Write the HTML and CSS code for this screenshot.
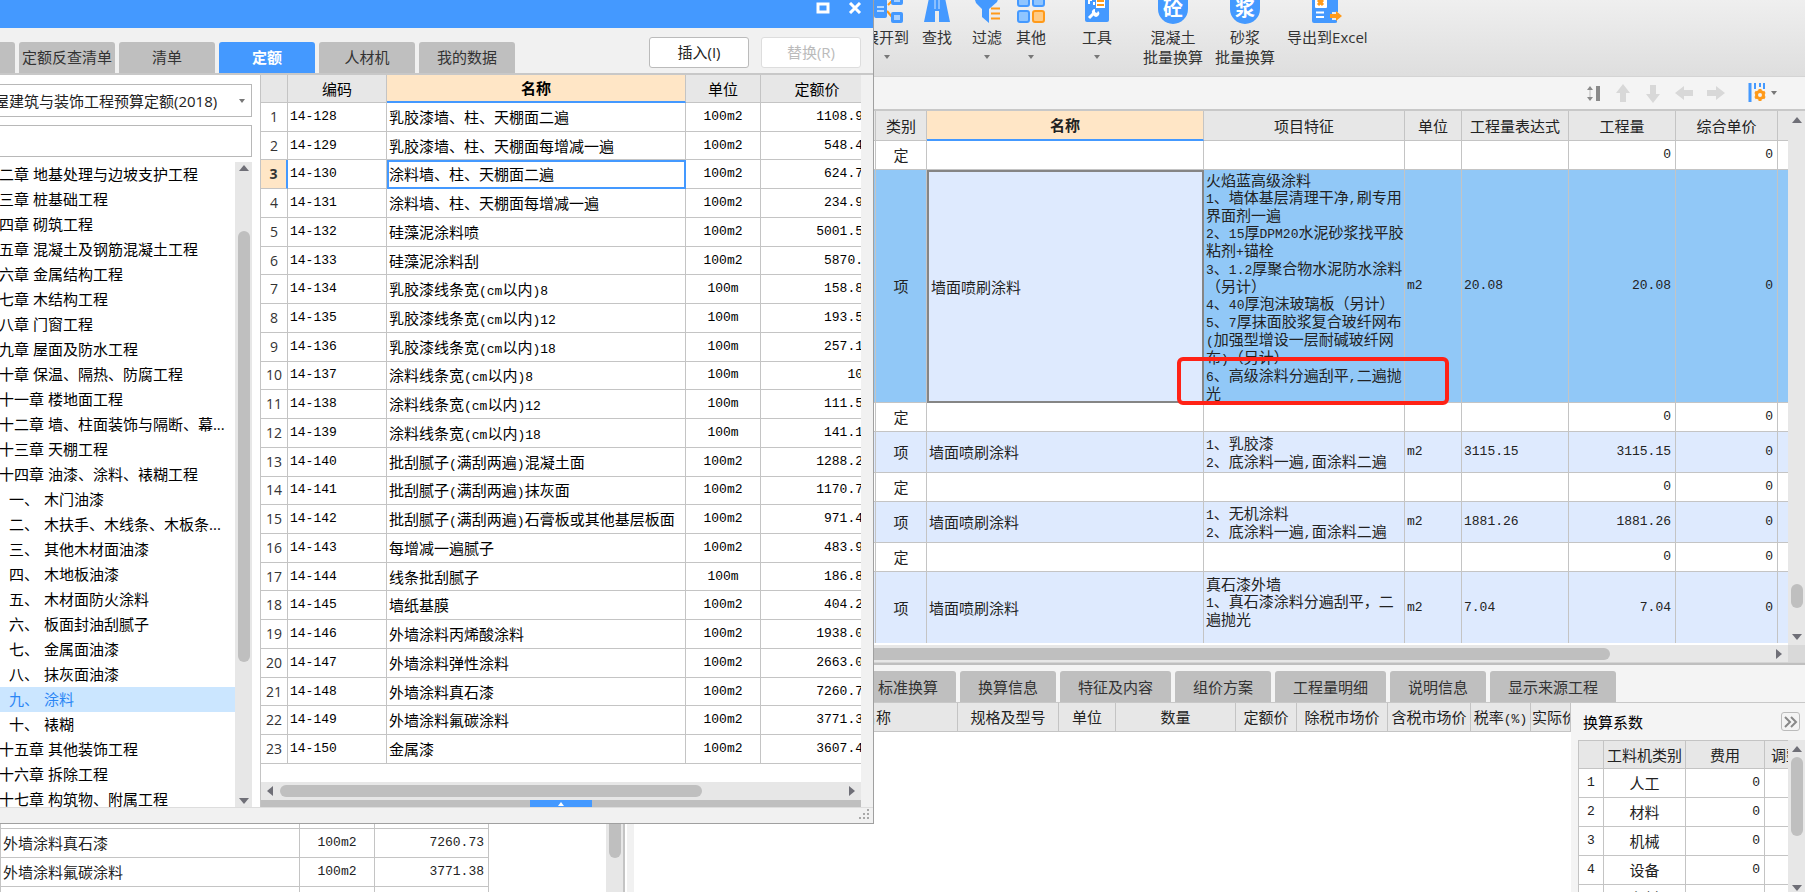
FILE: index.html
```html
<!DOCTYPE html>
<html lang="zh-CN">
<head>
<meta charset="utf-8">
<title>定额查询</title>
<link rel="stylesheet" href="styles.css">
</head>
<body>
<div class="app">
  <aside class="back-pane">
    <div class="back-list">
      <table class="grid back-table">
        <colgroup><col><col class="w75"><col class="w114"></colgroup>
        <tbody>
          <tr><td></td><td></td><td></td></tr>
          <tr><td>外墙涂料真石漆</td><td class="num mid">100m2</td><td class="num end">7260.73</td></tr>
          <tr><td>外墙涂料氟碳涂料</td><td class="num mid">100m2</td><td class="num end">3771.38</td></tr>
          <tr class="peek"><td></td><td></td><td></td></tr>
        </tbody>
      </table>
    </div>
    <div class="vscroll back-scroll"><span class="thumb"></span></div>
    <div class="splitter"></div>
  </aside>

  <main class="workspace">
    <header class="ribbon">
      <div class="group">
        <button class="tool" type="button">
          <svg width="32" height="24" viewBox="0 0 32 24"><path d="M17 5l4-4M16 11l5 6" stroke="#ff9a1a" stroke-width="2" fill="none"/><rect x="3" y="-1" width="13" height="19" rx="2" fill="#49f"/><path d="M6 7h7M6 11h7" stroke="#b5d8ff" stroke-width="2"/><rect x="20" y="-6" width="12" height="11" rx="2" fill="#49f"/><rect x="23" y="-2" width="6" height="4" fill="#a9d1ff"/><rect x="20" y="12" width="12" height="11" rx="2" fill="#49f"/><rect x="23" y="15" width="6" height="5" fill="#a9d1ff"/></svg>
          <span>展开到</span><i class="caret"></i>
        </button>
        <button class="tool" type="button">
          <svg width="32" height="24" viewBox="0 0 32 24"><path d="M8-2h16l5 24H18V11h-4v11H3z" fill="#49f"/><path d="M14 0v9M18 0v9" stroke="#cfe5ff"/></svg>
          <span>查找</span>
        </button>
      </div>
      <div class="group tight">
        <button class="tool" type="button">
          <svg width="32" height="24" viewBox="0 0 32 24"><path d="M3-3h25l-2 5-8 7v14l-7-6V9L5 3z" fill="#49f"/><path d="M20 8.500h9M20 13.500h9M20 18.500h9" stroke="#ff9a1a" stroke-width="2"/></svg>
          <span>过滤</span><i class="caret"></i>
        </button>
        <button class="tool" type="button">
          <svg width="32" height="24" viewBox="0 0 32 24" fill="#8fc5ff" stroke="#49f" stroke-width="2"><rect x="3" y="-4" width="11" height="10" rx="2"/><rect x="18" y="-4" width="11" height="10" rx="2"/><rect x="3" y="11" width="11" height="11" rx="2"/><rect x="18" y="11" width="11" height="11" rx="2" fill="#ffcb85" stroke="#ff9a1a"/></svg>
          <span>其他</span><i class="caret"></i>
        </button>
      </div>
      <div class="group apart">
        <button class="tool" type="button">
          <svg width="32" height="24" viewBox="0 0 32 24"><rect x="4" y="-4" width="24" height="26" rx="2" fill="#49f"/><path d="M8 4V0h3M13 2v3" stroke="#fff" stroke-width="2" fill="none"/><rect x="15" y="-3" width="9" height="11" fill="#fff"/><path d="M16 1h7M16 5h7" stroke="#ff9a1a" stroke-width="2"/><path d="M8 18l5-5" stroke="#fff" stroke-width="3"/><path d="M11 13a3 3 0 0 1 3-4v3l2 1 1-2a3 3 0 0 1-4 5z" fill="#fff"/></svg>
          <span>工具</span><i class="caret"></i>
        </button>
      </div>
      <div class="group wide">
        <button class="tool" type="button"><span class="seal"><b>砼</b></span><span>混凝土</span><span>批量换算</span></button>
        <button class="tool" type="button"><span class="seal"><b>浆</b></span><span>砂浆</span><span>批量换算</span></button>
        <button class="tool" type="button">
          <svg width="32" height="24" viewBox="0 0 32 24"><path d="M1-4h26v16h-6v8h5v2q0 1-2 1H3q-2 0-2-2z" fill="#49f"/><rect x="4" y="-3" width="12" height="11" rx="1" fill="#fff"/><path d="M7 0l5 5M12 0L7 5" stroke="#ff9a1a" stroke-width="3"/><path d="M5 12.500h8M5 17h8" stroke="#fff" stroke-width="2"/><path d="M19 14h6v-3l6 5-6 5v-3h-6z" fill="#ff9a1a"/></svg>
          <span>导出到Excel</span>
        </button>
      </div>
    </header>

    <div class="actions">
      <button type="button" aria-label="行高"><svg width="18" height="18" viewBox="0 0 18 18"><path d="M3 6l3-4 3 4zM3 13l3 4 3-4z" fill="#8a8a8a"/><path d="M6 6v7" stroke="#bbb"/><rect x="12" y="2" width="4" height="15" fill="#8a8a8a"/></svg></button>
      <button type="button" aria-label="上移"><svg width="18" height="20" viewBox="0 0 18 20"><path d="M9 1l7 9h-4v9H6v-9H2z" fill="#d8d8d8"/></svg></button>
      <button type="button" aria-label="下移"><svg width="18" height="20" viewBox="0 0 18 20"><path d="M9 20l7-9h-4V2H6v9H2z" fill="#d8d8d8"/></svg></button>
      <button type="button" aria-label="左移"><svg width="20" height="18" viewBox="0 0 20 18"><path d="M1 9l9-7v4h9v6h-9v4z" fill="#d8d8d8"/></svg></button>
      <button type="button" aria-label="右移"><svg width="20" height="18" viewBox="0 0 20 18"><path d="M19 9l-9-7v4H1v6h9v4z" fill="#d8d8d8"/></svg></button>
      <button class="setup" type="button" aria-label="列设置"><svg width="18" height="20" viewBox="0 0 18 20"><path d="M2 0v19" stroke="#49f" stroke-width="3"/><path d="M7 0v6M12 0v4M16 0v6" stroke="#49f" stroke-width="2"/><circle cx="12" cy="12" r="3.500" fill="none" stroke="#ff9a1a" stroke-width="3"/><g stroke="#ff9a1a" stroke-width="3"><path d="M12 6v2M12 16v2M7 9l2 1M15 14l2 1M7 15l2-1M15 10l2-1"/></g></svg><i class="caret"></i></button>
    </div>

    <section class="bill">
      <div class="bill-view">
        <table class="grid bill-table">
          <colgroup><col class="w16"><col class="w51"><col><col class="w201"><col class="w57"><col class="w107"><col class="w107"><col class="w102"><col class="w10"></colgroup>
          <thead><tr><th></th><th>类别</th><th class="current">名称</th><th>项目特征</th><th>单位</th><th>工程量表达式</th><th>工程量</th><th>综合单价</th><th></th></tr></thead>
          <tbody>
            <tr class="quota"><td></td><td class="mid">定</td><td></td><td></td><td></td><td></td><td class="num end">0</td><td class="num end">0</td><td></td></tr>
            <tr class="item picked"><td></td><td class="mid">项</td><td class="focus">墙面喷刷涂料</td>
              <td class="spec">火焰蓝高级涂料<br><i>1</i>、墙体基层清理干净<i>,</i>刷专用<br>界面剂一遍<br><i>2</i>、<i>15</i>厚<i>DPM20</i>水泥砂浆找平胶<br>粘剂<i>+</i>锚栓<br><i>3</i>、<i>1.2</i>厚聚合物水泥防水涂料<br>（另计）<br><i>4</i>、<i>40</i>厚泡沫玻璃板（另计）<br><i>5</i>、<i>7</i>厚抹面胶浆复合玻纤网布<br><i>(</i>加强型增设一层耐碱玻纤网<br>布<i>)</i>（另计）<br><i>6</i>、高级涂料分遍刮平<i>,</i>二遍抛<br>光<div class="marker"></div></td>
              <td class="num">m2</td><td class="num">20.08</td><td class="num end">20.08</td><td class="num end">0</td><td></td></tr>
            <tr class="quota"><td></td><td class="mid">定</td><td></td><td></td><td></td><td></td><td class="num end">0</td><td class="num end">0</td><td></td></tr>
            <tr class="item"><td></td><td class="mid">项</td><td>墙面喷刷涂料</td><td class="spec"><i>1</i>、乳胶漆<br><i>2</i>、底涂料一遍<i>,</i>面涂料二遍</td><td class="num">m2</td><td class="num">3115.15</td><td class="num end">3115.15</td><td class="num end">0</td><td></td></tr>
            <tr class="quota"><td></td><td class="mid">定</td><td></td><td></td><td></td><td></td><td class="num end">0</td><td class="num end">0</td><td></td></tr>
            <tr class="item"><td></td><td class="mid">项</td><td>墙面喷刷涂料</td><td class="spec"><i>1</i>、无机涂料<br><i>2</i>、底涂料一遍<i>,</i>面涂料二遍</td><td class="num">m2</td><td class="num">1881.26</td><td class="num end">1881.26</td><td class="num end">0</td><td></td></tr>
            <tr class="quota"><td></td><td class="mid">定</td><td></td><td></td><td></td><td></td><td class="num end">0</td><td class="num end">0</td><td></td></tr>
            <tr class="item last"><td></td><td class="mid">项</td><td>墙面喷刷涂料</td><td class="spec">真石漆外墙<br><i>1</i>、真石漆涂料分遍刮平，二<br>遍抛光</td><td class="num">m2</td><td class="num">7.04</td><td class="num end">7.04</td><td class="num end">0</td><td></td></tr>
          </tbody>
        </table>
      </div>
      <div class="vscroll bill-scroll"><i class="arrow up"></i><span class="thumb"></span><i class="arrow down"></i></div>
    </section>
    <div class="hscroll bill-hscroll"><span class="thumb"></span><i class="arrow right"></i><span class="corner"></span></div>

    <section class="detail">
      <nav class="tabs">
        <button type="button">标准换算</button><button type="button">换算信息</button><button type="button">特征及内容</button><button type="button">组价方案</button><button type="button">工程量明细</button><button type="button">说明信息</button><button type="button">显示来源工程</button>
      </nav>
      <div class="detail-body">
        <div class="detail-view">
          <table class="grid detail-table">
            <colgroup><col class="w98"><col class="w101"><col class="w57"><col class="w120"><col class="w61"><col class="w91"><col class="w83"><col class="w60"><col></colgroup>
            <thead><tr><th class="start">名称</th><th>规格及型号</th><th>单位</th><th>数量</th><th>定额价</th><th>除税市场价</th><th>含税市场价</th><th>税率<i>(%)</i></th><th class="start">实际价</th></tr></thead>
          </table>
        </div>
        <aside class="factor">
          <div class="factor-head"><span>换算系数</span><button type="button" aria-label="收起"><svg width="15" height="12" viewBox="0 0 15 12"><path d="M2 1l5 5-5 5M8 1l5 5-5 5" fill="none" stroke="#888" stroke-width="2"/></svg></button></div>
          <div class="factor-main">
            <div class="factor-view">
              <table class="grid factor-table">
                <colgroup><col class="w25"><col class="w82"><col class="w79"><col></colgroup>
                <thead><tr><th></th><th>工料机类别</th><th>费用</th><th class="start">调整</th></tr></thead>
                <tbody>
                  <tr><td class="num mid">1</td><td class="mid">人工</td><td class="num end">0</td><td></td></tr>
                  <tr><td class="num mid">2</td><td class="mid">材料</td><td class="num end">0</td><td></td></tr>
                  <tr><td class="num mid">3</td><td class="mid">机械</td><td class="num end">0</td><td></td></tr>
                  <tr><td class="num mid">4</td><td class="mid">设备</td><td class="num end">0</td><td></td></tr>
                  <tr class="cut"><td></td><td class="mid">主材</td><td></td><td></td></tr>
                </tbody>
              </table>
            </div>
            <div class="vscroll factor-scroll"><i class="arrow up"></i><span class="thumb"></span><i class="arrow down"></i></div>
          </div>
        </aside>
      </div>
    </section>
  </main>
</div>

<section class="dialog" role="dialog" aria-label="查询">
  <div class="titlebar">
    <button type="button" aria-label="最大化"><svg width="14" height="12" viewBox="0 0 14 12"><rect x="2" y="2" width="10" height="8" fill="none" stroke="#fff" stroke-width="3"/></svg></button>
    <button type="button" aria-label="关闭"><svg width="14" height="12" viewBox="0 0 14 12"><path d="M2 1l10 10M12 1L2 11" stroke="#fff" stroke-width="3"/></svg></button>
  </div>
  <div class="dialog-top">
    <nav class="tabs"><button class="stub" type="button" aria-label="上一页"></button><button type="button">定额反查清单</button><button type="button">清单</button><button class="on" type="button">定额</button><button type="button">人材机</button><button type="button">我的数据</button></nav>
    <div class="commands"><button type="button">插入(I)</button><button type="button" disabled>替换(R)</button></div>
  </div>
  <div class="dialog-body">
    <div class="catalog">
      <div class="pick"><select aria-label="定额库"><option>屋建筑与装饰工程预算定额(2018)</option></select><i class="caret"></i></div>
      <input class="search" type="text" aria-label="搜索">
      <div class="tree-box">
        <ul class="tree">
          <li>二章 地基处理与边坡支护工程</li><li>三章 桩基础工程</li><li>四章 砌筑工程</li><li>五章 混凝土及钢筋混凝土工程</li><li>六章 金属结构工程</li><li>七章 木结构工程</li><li>八章 门窗工程</li><li>九章 屋面及防水工程</li><li>十章 保温、隔热、防腐工程</li><li>十一章 楼地面工程</li><li>十二章 墙、柱面装饰与隔断、幕...</li><li>十三章 天棚工程</li><li>十四章 油漆、涂料、裱糊工程</li>
          <li class="sub"><span>一、</span>木门油漆</li><li class="sub"><span>二、</span>木扶手、木线条、木板条...</li><li class="sub"><span>三、</span>其他木材面油漆</li><li class="sub"><span>四、</span>木地板油漆</li><li class="sub"><span>五、</span>木材面防火涂料</li><li class="sub"><span>六、</span>板面封油刮腻子</li><li class="sub"><span>七、</span>金属面油漆</li><li class="sub"><span>八、</span>抹灰面油漆</li><li class="sub on"><span>九、</span>涂料</li><li class="sub"><span>十、</span>裱糊</li>
          <li>十五章 其他装饰工程</li><li>十六章 拆除工程</li><li>十七章 构筑物、附属工程</li>
        </ul>
        <div class="vscroll tree-scroll"><i class="arrow up"></i><span class="thumb"></span><i class="arrow down"></i></div>
      </div>
    </div>
    <div class="results">
      <div class="results-view">
        <table class="grid results-table">
          <colgroup><col class="w27"><col class="w99"><col><col class="w75"><col class="w113"></colgroup>
          <thead><tr><th></th><th>编码</th><th class="current">名称</th><th>单位</th><th>定额价</th></tr></thead>
          <tbody>
            <tr><td>1</td><td>14-128</td><td>乳胶漆墙、柱、天棚面二遍</td><td>100m2</td><td>1108.9</td></tr>
            <tr><td>2</td><td>14-129</td><td>乳胶漆墙、柱、天棚面每增减一遍</td><td>100m2</td><td>548.4</td></tr>
            <tr class="chosen"><td>3</td><td>14-130</td><td>涂料墙、柱、天棚面二遍</td><td>100m2</td><td>624.7</td></tr>
            <tr><td>4</td><td>14-131</td><td>涂料墙、柱、天棚面每增减一遍</td><td>100m2</td><td>234.9</td></tr>
            <tr><td>5</td><td>14-132</td><td>硅藻泥涂料喷</td><td>100m2</td><td>5001.5</td></tr>
            <tr><td>6</td><td>14-133</td><td>硅藻泥涂料刮</td><td>100m2</td><td>5870.</td></tr>
            <tr><td>7</td><td>14-134</td><td>乳胶漆线条宽<i>(cm</i>以内<i>)8</i></td><td>100m</td><td>158.8</td></tr>
            <tr><td>8</td><td>14-135</td><td>乳胶漆线条宽<i>(cm</i>以内<i>)12</i></td><td>100m</td><td>193.5</td></tr>
            <tr><td>9</td><td>14-136</td><td>乳胶漆线条宽<i>(cm</i>以内<i>)18</i></td><td>100m</td><td>257.1</td></tr>
            <tr><td>10</td><td>14-137</td><td>涂料线条宽<i>(cm</i>以内<i>)8</i></td><td>100m</td><td>10</td></tr>
            <tr><td>11</td><td>14-138</td><td>涂料线条宽<i>(cm</i>以内<i>)12</i></td><td>100m</td><td>111.5</td></tr>
            <tr><td>12</td><td>14-139</td><td>涂料线条宽<i>(cm</i>以内<i>)18</i></td><td>100m</td><td>141.1</td></tr>
            <tr><td>13</td><td>14-140</td><td>批刮腻子<i>(</i>满刮两遍<i>)</i>混凝土面</td><td>100m2</td><td>1288.2</td></tr>
            <tr><td>14</td><td>14-141</td><td>批刮腻子<i>(</i>满刮两遍<i>)</i>抹灰面</td><td>100m2</td><td>1170.7</td></tr>
            <tr><td>15</td><td>14-142</td><td>批刮腻子<i>(</i>满刮两遍<i>)</i>石膏板或其他基层板面</td><td>100m2</td><td>971.4</td></tr>
            <tr><td>16</td><td>14-143</td><td>每增减一遍腻子</td><td>100m2</td><td>483.9</td></tr>
            <tr><td>17</td><td>14-144</td><td>线条批刮腻子</td><td>100m</td><td>186.8</td></tr>
            <tr><td>18</td><td>14-145</td><td>墙纸基膜</td><td>100m2</td><td>404.2</td></tr>
            <tr><td>19</td><td>14-146</td><td>外墙涂料丙烯酸涂料</td><td>100m2</td><td>1938.0</td></tr>
            <tr><td>20</td><td>14-147</td><td>外墙涂料弹性涂料</td><td>100m2</td><td>2663.0</td></tr>
            <tr><td>21</td><td>14-148</td><td>外墙涂料真石漆</td><td>100m2</td><td>7260.7</td></tr>
            <tr><td>22</td><td>14-149</td><td>外墙涂料氟碳涂料</td><td>100m2</td><td>3771.3</td></tr>
            <tr><td>23</td><td>14-150</td><td>金属漆</td><td>100m2</td><td>3607.4</td></tr>
          </tbody>
        </table>
      </div>
      <div class="hscroll results-hscroll"><i class="arrow left"></i><span class="thumb"></span><i class="arrow right"></i></div>
      <div class="drawer"><button type="button" aria-label="展开"></button></div>
    </div>
  </div>
  <div class="statusbar"><svg width="12" height="12" viewBox="0 0 12 12" fill="#a8a8a8"><path d="M9 0h2v2H9zM9 4h2v2H9zM5 4h2v2H5zM9 8h2v2H9zM5 8h2v2H5zM1 8h2v2H1z"/></svg></div>
</section>
</body>
</html>
```
FILE: styles.css
```css
* { box-sizing: border-box; }

body {
  margin: 0;
  height: 100vh;
  overflow: hidden;
  position: relative;
  background: #fff;
  color: #222;
  font: 15px/20px "Open Sans", "Noto Sans CJK SC", sans-serif;
}

button {
  margin: 0;
  padding: 0;
  border: 0;
  background: none;
  color: inherit;
  font: inherit;
}

svg { display: block; }

/* shared tables */
.grid {
  width: 100%;
  border-spacing: 0;
  table-layout: fixed;
  font-family: "Noto Sans CJK SC", sans-serif;
}
.grid th, .grid td {
  padding: 0 2px;
  border-right: 1px solid #c4c4c4;
  border-bottom: 1px solid #c4c4c4;
  text-align: left;
  white-space: nowrap;
  overflow: hidden;
}
.grid th {
  background: #e7e7e7;
  font-weight: 400;
  text-align: center;
}
.grid th.start { text-align: left; }
.grid th.current {
  background: #ffe6c6;
  border-bottom: 2px solid #49f;
  font-weight: 700;
}
.grid .num, .grid i {
  font-family: "Liberation Mono", monospace;
  font-size: 13px;
  font-style: normal;
}
.grid i { line-height: 1; }
.grid .mid { text-align: center; }
.grid .end { text-align: right; padding-right: 4px; }

.w10 { width: 10px; }
.w16 { width: 16px; }
.w25 { width: 25px; }
.w27 { width: 27px; }
.w51 { width: 51px; }
.w57 { width: 57px; }
.w60 { width: 60px; }
.w61 { width: 61px; }
.w75 { width: 75px; }
.w79 { width: 79px; }
.w82 { width: 82px; }
.w83 { width: 83px; }
.w91 { width: 91px; }
.w98 { width: 98px; }
.w99 { width: 99px; }
.w101 { width: 101px; }
.w102 { width: 102px; }
.w107 { width: 107px; }
.w113 { width: 113px; }
.w114 { width: 114px; }
.w120 { width: 120px; }
.w201 { width: 201px; }

/* scroll bars */
.vscroll {
  flex: none;
  width: 17px;
  display: flex;
  flex-direction: column;
  align-items: center;
  background: #e7e7e7;
}
.hscroll {
  flex: none;
  height: 18px;
  display: flex;
  align-items: center;
  background: #e7e7e7;
}
.thumb { background: #bfbfbf; border-radius: 6px; }
.vscroll .thumb { width: 12px; }
.hscroll .thumb { height: 12px; }
.arrow { border: 5px solid transparent; width: 0; height: 0; }
.arrow.up { border-top: 0; border-bottom: 6px solid #6f6f77; }
.arrow.down { border-bottom: 0; border-top: 6px solid #6f6f77; margin-top: auto; }
.arrow.left { border-left: 0; border-right: 6px solid #6f6f77; }
.arrow.right { border-right: 0; border-left: 6px solid #6f6f77; margin-left: auto; }
.caret {
  width: 0;
  height: 0;
  border: 3px solid transparent;
  border-top: 4px solid #777;
  border-bottom: 0;
}

/* tabs */
.tabs { display: flex; gap: 4px; }
.tabs button {
  height: 31px;
  padding: 0 18px;
  background: #bfbfbf;
  border-radius: 3px 3px 0 0;
  white-space: nowrap;
  color: #333;
}

/* main window */
.app { display: flex; height: 100%; }
.back-pane { flex: none; width: 634px; display: flex; }
.back-list {
  flex: 1;
  display: flex;
  flex-direction: column;
  justify-content: flex-end;
  padding-right: 117px;
}
.back-table { border-left: 1px solid #c4c4c4; }
.back-table td { height: 29px; }
.back-table .peek td { height: 5px; border-bottom: 0; }
.back-scroll .thumb { height: 858px; }
.splitter {
  width: 11px;
  border-left: 2px solid #c4c4c4;
  border-right: 7px solid #f1f1f1;
}

.workspace {
  flex: 1;
  min-width: 0;
  display: flex;
  flex-direction: column;
  padding-left: 226px;
}

.ribbon {
  flex: none;
  height: 76px;
  display: flex;
  gap: 6px;
  padding-left: 4px;
  background: linear-gradient(#efefef, #dedede);
}
.group { display: flex; gap: 6px; }
.group.tight { gap: 0; }
.group.apart { margin-left: 16px; }
.group.wide { gap: 12px; margin-left: 18px; }
.tool {
  min-width: 44px;
  display: flex;
  flex-direction: column;
  align-items: center;
  color: #333;
  white-space: nowrap;
}
.tool svg, .tool .seal { margin-bottom: 3px; }
.tool .caret { margin-top: 8px; }
.seal {
  width: 30px;
  height: 24px;
  display: flex;
  align-items: flex-end;
  justify-content: center;
  background: #49f;
  border-radius: 0 0 15px 15px;
  color: #fff;
  font-size: 20px;
  line-height: 30px;
}

.actions {
  flex: none;
  height: 35px;
  display: flex;
  align-items: center;
  justify-content: flex-end;
  gap: 12px;
  padding-right: 28px;
  background: #f4f4f4;
  border-top: 1px solid #d4d4d4;
  border-bottom: 2px solid #c8c8c8;
}
.setup { display: flex; align-items: center; gap: 5px; margin-left: 10px; }

.bill { flex: 1; min-height: 0; display: flex; }
.bill-view { flex: 1; min-width: 0; overflow: hidden; margin-bottom: 2px; }
.bill-table th { height: 30px; }
.bill-table .quota td { height: 29px; }
.bill-table .item td { height: 41px; background: #deeafe; }
.bill-table .picked td { height: 233px; background: #91c8f7; }
.bill-table .item.last td { height: 71px; border-bottom: 0; }
.bill-table th:last-child, .bill-table td:last-child { border-right: 0; }
.bill-table .picked .focus { background: #deeafe; border: 2px solid #858585; }
.bill-table .spec {
  position: relative;
  overflow: visible;
  line-height: 17px;
  color: #222;
}
.bill-table .last .spec { vertical-align: top; padding-top: 3px; }
.marker {
  position: absolute;
  left: -27px;
  right: -45px;
  bottom: -3px;
  height: 48px;
  border: 4px solid #ff2216;
  border-radius: 6px;
}
.bill-scroll { padding: 6px 0 5px; }
.bill-scroll .thumb { height: 24px; margin-top: auto; margin-bottom: 26px; }
.bill-scroll .arrow.down { margin-top: 0; }
.bill-hscroll { border-bottom: 1px solid #d4d4d4; }
.bill-hscroll .thumb { width: 750px; }
.bill-hscroll .corner { width: 17px; height: 17px; margin-left: 6px; background: #d9d9d9; }

.detail {
  flex: none;
  height: 229px;
  display: flex;
  flex-direction: column;
  padding-top: 6px;
  background: #f4f4f4;
  border-top: 2px solid #bfbfbf;
}
.detail .tabs { border-bottom: 1px solid #c8c8c8; }
.detail-body { flex: 1; min-height: 0; display: flex; background: #fff; }
.detail-view { flex: 1; min-width: 0; overflow: hidden; }
.detail-table th { height: 29px; padding: 0 1px; }

.factor {
  flex: none;
  width: 234px;
  display: flex;
  flex-direction: column;
  background: #f4f4f4;
}
.factor-head {
  flex: none;
  height: 37px;
  display: flex;
  align-items: center;
  justify-content: space-between;
  padding: 0 5px 0 12px;
  color: #000;
  font-family: "Noto Sans CJK SC", sans-serif;
}
.factor-head button {
  width: 19px;
  height: 19px;
  display: grid;
  place-items: center;
  border: 1px solid #bbb;
  border-radius: 3px;
}
.factor-main { flex: 1; min-height: 0; display: flex; padding-left: 7px; }
.factor-view {
  flex: 1;
  min-width: 0;
  overflow: hidden;
  background: #fff;
  border-left: 1px solid #c4c4c4;
  border-top: 1px solid #c4c4c4;
}
.factor-table th { height: 28px; }
.factor-table td { height: 29px; }
.factor-table .cut td { height: 26px; }
.factor-table th:last-child { border-right: 0; padding-left: 6px; }
.factor-table td:last-child { border-right: 0; }
.factor-scroll { padding: 6px 0 1px; }
.factor-scroll .thumb { height: 79px; margin-top: 5px; }

/* query dialog */
.dialog {
  position: absolute;
  top: 0;
  left: 0;
  width: 874px;
  height: 824px;
  display: flex;
  flex-direction: column;
  background: #f1f1f1;
  border-right: 1px solid #a0a0a0;
  border-bottom: 1px solid #a0a0a0;
  overflow: hidden;
}
.titlebar {
  flex: none;
  height: 28px;
  display: flex;
  justify-content: flex-end;
  align-items: flex-start;
  gap: 18px;
  padding: 2px 11px;
  background: #49f;
}
.dialog-top {
  flex: none;
  height: 47px;
  display: flex;
  justify-content: space-between;
  align-items: flex-end;
  padding-right: 12px;
  border-bottom: 2px solid #c8c8c8;
}
.dialog .tabs button { width: 96px; padding: 0 0 2px; }
.dialog .tabs .stub { width: 15px; border-radius: 0 3px 0 0; }
.dialog .tabs .on { background: #49f; color: #fff; font-weight: 700; }
.commands { display: flex; gap: 12px; padding-bottom: 5px; }
.commands button {
  width: 100px;
  height: 31px;
  padding-bottom: 2px;
  background: #fff;
  border: 1px solid #bbb;
  border-radius: 3px;
}
.commands button:disabled { color: #bbb; border-color: #ddd; }

.dialog-body { flex: 1; min-height: 0; display: flex; padding-right: 12px; }
.catalog {
  flex: none;
  width: 261px;
  display: flex;
  flex-direction: column;
  gap: 8px;
  padding: 9px 8px 0 0;
  background: #fff;
  border-right: 1px solid #c4c4c4;
  overflow: hidden;
}
.pick {
  display: flex;
  align-items: center;
  height: 33px;
  padding-right: 6px;
  border: 1px solid #b8b8b8;
  border-left: 0;
}
.pick select {
  appearance: none;
  flex: 1;
  min-width: 0;
  margin-left: -6px;
  padding: 0;
  border: 0;
  background: none;
  color: #222;
  font: inherit;
}
.search {
  width: 100%;
  height: 32px;
  border: 1px solid #b8b8b8;
  border-left: 0;
}
.tree-box { flex: 1; min-height: 0; display: flex; margin-top: -3px; }
.tree {
  flex: 1;
  min-width: 0;
  margin: 0 0 0 -1px;
  padding: 0;
  list-style: none;
  overflow: hidden;
  color: #000;
  white-space: nowrap;
}
.tree li { height: 25px; line-height: 25px; }
.tree .sub { display: flex; gap: 5px; padding-left: 10px; }
.tree .sub span { flex: none; width: 30px; }
.tree .on { background: #cbe6ff; color: #2a85f5; }
.tree-scroll { padding: 3px 0; }
.tree-scroll .thumb { height: 431px; margin-top: 60px; }

.results {
  flex: 1;
  min-width: 0;
  display: flex;
  flex-direction: column;
  background: #fff;
}
.results-view {
  flex: 1;
  min-height: 0;
  margin-bottom: 18px;
  overflow: hidden;
}
.results-table { width: calc(100% + 13px); height: 100%; color: #000; }
.results-table th, .results-table td { height: 28px; }
.results-table td { font-family: "Liberation Mono", monospace; font-size: 13px; }
.results-table td:nth-child(1) {
  font: 14px/20px "Open Sans", sans-serif;
  text-align: center;
  color: #333;
}
.results-table td:nth-child(3) { font: 15px/20px "Noto Sans CJK SC", sans-serif; }
.results-table td:nth-child(4) { text-align: center; }
.results-table td:nth-child(5) { text-align: right; padding-right: 10px; }
.results-table .chosen td:nth-child(1) {
  background: #ffe6c6;
  border-right: 2px solid #49f;
  font-weight: 700;
}
.results-table .chosen td:nth-child(3) { outline: 2px solid #49f; outline-offset: -2px; }
.results-hscroll { padding: 0 6px; }
.results-hscroll .thumb { width: 422px; margin-left: 7px; }
.drawer {
  flex: none;
  height: 7px;
  padding-left: 269px;
  background: #bfbfbf;
}
.drawer button {
  width: 62px;
  height: 7px;
  display: grid;
  place-items: center;
  background: #49f;
}
.drawer button::after {
  content: "";
  border: 3px solid transparent;
  border-top: 0;
  border-bottom: 4px solid #fff;
}
.statusbar {
  flex: none;
  height: 16px;
  display: flex;
  justify-content: flex-end;
  padding: 1px 3px;
  border-top: 1px solid #ddd;
}
```
